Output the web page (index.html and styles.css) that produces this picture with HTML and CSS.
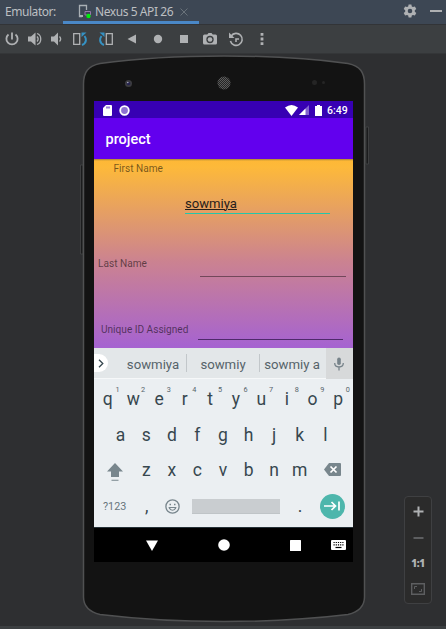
FILE: index.html
```html
<!DOCTYPE html>
<html lang="en">
<head>
<meta charset="utf-8">
<title>Emulator</title>
<link rel="stylesheet" href="styles.css">
</head>
<body>
<header class="tabs">
  <span class="tabs-label">Emulator:</span>
  <div class="tab">
    <svg class="tab-icon" width="14" height="15" viewBox="0 0 14 15"><path d="M4 12.5H1.5v-11h7V6" fill="none" stroke="#a9afb4" stroke-width="1.3"/><path d="M1 11h4v2H1z" fill="#a9afb4"/><path d="M12.5 11V7.5H7V11h2" fill="none" stroke="#9876aa"/><circle cx="10.5" cy="12" r="2.2" fill="#00ee0b"/></svg>
    <span>Nexus 5 API 26</span>
    <svg width="8" height="8" viewBox="0 0 8 8"><path d="M.5.5l7 7m0-7l-7 7" stroke="#69727a"/></svg>
  </div>
  <div class="tabs-actions">
    <svg width="14" height="14" viewBox="0 0 14 14"><path fill="#afb1b3" fill-rule="evenodd" d="M5.6.5h2.8l.4 1.900 1.200.7 1.900-.6 1.400 2.400L11.800 6.300v1.400l1.500 1.400-1.400 2.400-1.900-.6-1.200.7-.4 1.900H5.600l-.4-1.900-1.200-.7-1.900.6L.7 9.100l1.500-1.400V6.300L.7 4.900l1.400-2.400 1.900.6 1.200-.7zM7 4.700a2.300 2.300 0 1 0 0 4.600 2.300 2.300 0 0 0 0-4.600z"/></svg>
    <i class="minimize"></i>
  </div>
</header>
<div class="toolbar">
  <svg viewBox="0 0 16 16"><path d="M4.500 3.500a5.600 5.600 0 1 0 7 0M8 1.500v7" fill="none" stroke="#afb1b3" stroke-width="1.800"/></svg>
  <svg class="volume-up" viewBox="0 0 16 16"><path d="M1 5.500h3l4.500-4v13l-4.500-4H1z" fill="#afb1b3"/><path d="M10 5.500q2.300 2.500 0 5M10 2.500c5 1.500 5 9.500 0 11" fill="none" stroke="#afb1b3" stroke-width="1.300"/></svg>
  <svg class="volume-down" viewBox="0 0 16 16"><path d="M3 5.500h3l4-4v13l-4-4H3z" fill="#afb1b3"/><path d="M11.500 5.500q2.300 2.500 0 5" fill="none" stroke="#afb1b3" stroke-width="1.300"/></svg>
  <svg class="rotate-left" viewBox="0 0 16 16"><path d="M1.700 2.700h6v10.600h-6z" fill="none" stroke="#afb1b3" stroke-width="1.300"/><path d="M10 14c5-2 4.500-6.500 2.500-9" fill="none" stroke="#3592c4" stroke-width="2"/><path d="M9.500 6V1.500h5z" fill="#3592c4"/></svg>
  <svg viewBox="0 0 16 16"><path d="M8.300 2.700h6v10.600h-6z" fill="none" stroke="#afb1b3" stroke-width="1.300"/><path d="M6 14C1 12 1.500 7.500 3.500 5" fill="none" stroke="#3592c4" stroke-width="2"/><path d="M6.500 6V1.500h-5z" fill="#3592c4"/></svg>
  <svg viewBox="0 0 16 16"><path d="M12 3.500v9L3.500 8z" fill="#afb1b3"/></svg>
  <svg viewBox="0 0 16 16"><circle cx="8" cy="8" r="4.200" fill="#afb1b3"/></svg>
  <svg viewBox="0 0 16 16"><path d="M4 4h8v8H4z" fill="#afb1b3"/></svg>
  <svg viewBox="0 0 16 16"><path fill-rule="evenodd" d="M2.500 3.500h2.800L6.500 2h3l1.200 1.500h2.800q1.500 0 1.500 1.500v7q0 1.500-1.500 1.500h-11Q1 13.500 1 12V5q0-1.500 1.500-1.500zM8 4.800a3.700 3.700 0 1 0 0 7.400 3.700 3.700 0 0 0 0-7.400z" fill="#afb1b3"/><circle cx="8" cy="8.500" r="2.300" fill="#afb1b3"/></svg>
  <svg viewBox="0 0 16 16"><path d="M3.200 5a6 6 0 1 1-.8 5M8 11V8h3" fill="none" stroke="#afb1b3" stroke-width="1.600"/><path d="M1 1.500v5.500h5.500z" fill="#afb1b3"/></svg>
  <svg viewBox="0 0 16 16"><path d="M6.600 2h2.800v2.800H6.600zM6.600 6.600h2.800v2.800H6.600zM6.600 11.200h2.800V14H6.600z" fill="#afb1b3"/></svg>
</div>
<main class="canvas">
  <section class="phone">
    <svg class="phone-body" width="290" height="573" viewBox="80 53 290 573">
      <defs>
        <pattern id="mesh" width="2" height="2" patternUnits="userSpaceOnUse"><path d="M0 0h1v1H0zM1 1h1v1H1z" fill="#5c5c5c"/></pattern>
      </defs>
      <path d="M80.500 165h2.500v89h-2.500zM366 127h2.500v37H366z" fill="#1b1c1d" stroke="#454647" stroke-width=".8"/>
      <path d="M83.500 84C83.500 72 88 66 100 63.500Q155 56 224 56T348 63.500C360 66 364.500 72 364.500 84V597C364.500 607 358 612 348 614.500Q290 621.500 224 621.500T100 614.500C90 612 83.500 607 83.500 597Z" fill="#131313" stroke="#505152" stroke-width="1.500"/>
      <circle cx="128.500" cy="83.500" r="3.500" fill="#3c3c40"/><circle cx="128.500" cy="83.500" r="1.800" fill="#25234f"/><circle cx="127.800" cy="82.500" r=".8" fill="#aaaabd"/>
      <circle cx="224" cy="83" r="6.500" fill="#242424"/><circle cx="224" cy="83" r="6.500" fill="url(#mesh)"/>
      <circle cx="314.500" cy="82.500" r="2.500" fill="#252525"/><circle cx="323.500" cy="82.500" r="1.500" fill="#252525"/>
    </svg>
    <div class="screen">
      <div class="status">
        <svg width="9" height="11" viewBox="0 0 9 11"><path d="M3 0h5q1 0 1 1v9q0 1-1 1H1q-1 0-1-1V3z" fill="#fff"/><path d="M3.500 1.500h1v2h-1zM5.500 1.500h1v2h-1z" fill="#3700b3"/></svg>
        <svg width="11" height="11" viewBox="0 0 11 11"><circle cx="5.500" cy="5.500" r="4.300" fill="#8e70d1" stroke="#fff" stroke-width="1.800"/></svg>
        <svg class="wifi" width="13" height="11" viewBox="0 0 13 11"><path d="M0 2.500q6.500-5 13 0L6.500 11z" fill="#fff"/></svg>
        <svg width="10" height="10" viewBox="0 0 10 10"><path d="M10 0v10H0z" fill="#8261cf"/><path d="M6.500 3.500V10H0z" fill="#fff"/></svg>
        <svg class="battery" width="7" height="11" viewBox="0 0 7 11"><path d="M2 0h3v1h2v10H0V1h2z" fill="#fff"/></svg>
        <span class="clock">6:49</span>
      </div>
      <div class="appbar">project</div>
      <div class="form">
        <div class="label first">First Name</div>
        <div class="field first-input"><u>sowmiya</u></div>
        <div class="row last"><span class="label">Last Name</span><div class="field"></div></div>
        <div class="row unique"><span class="label">Unique ID Assigned</span><div class="field"></div></div>
      </div>
      <div class="suggestions">
        <span class="expand"><svg width="6" height="9" viewBox="0 0 6 9"><path d="M1 .7l3.800 3.800L1 8.300" fill="none" stroke="#37474f" stroke-width="1.300"/></svg></span>
        <span class="word">sowmiya</span>
        <span class="word">sowmiy</span>
        <span class="word">sowmiy a</span>
        <span class="mic"><svg width="10" height="14" viewBox="0 0 10 14"><rect x="3.200" y=".5" width="3.600" height="7.500" rx="1.800" fill="#77838a"/><path d="M.7 6c0 5.300 8.600 5.300 8.600 0M5 10v3.500" fill="none" stroke="#77838a" stroke-width="1.300"/></svg></span>
      </div>
      <div class="keyboard">
        <div class="keys">
          <span class="key">q<sup>1</sup></span><span class="key">w<sup>2</sup></span><span class="key">e<sup>3</sup></span><span class="key">r<sup>4</sup></span><span class="key">t<sup>5</sup></span><span class="key">y<sup>6</sup></span><span class="key">u<sup>7</sup></span><span class="key">i<sup>8</sup></span><span class="key">o<sup>9</sup></span><span class="key">p<sup>0</sup></span>
        </div>
        <div class="keys">
          <span class="key">a</span><span class="key">s</span><span class="key">d</span><span class="key">f</span><span class="key">g</span><span class="key">h</span><span class="key">j</span><span class="key">k</span><span class="key">l</span>
        </div>
        <div class="keys">
          <span class="key wide"><svg class="shift" width="16" height="18" viewBox="0 0 16 18"><path d="M8 0l8 8.500h-4V14H4V8.500H0zM4.500 16.800h7v1h-7z" fill="#78868d"/></svg></span>
          <span class="key">z</span><span class="key">x</span><span class="key">c</span><span class="key">v</span><span class="key">b</span><span class="key">n</span><span class="key">m</span>
          <span class="key wide"><svg class="delete" width="17" height="13" viewBox="0 0 17 13"><path d="M5 0h11q1 0 1 1v11q0 1-1 1H5L0 6.500z" fill="#78868d"/><path d="M6.500 3.500l6 6m0-6l-6 6" stroke="#fff" stroke-width="1.700"/></svg></span>
        </div>
        <div class="keys bottom">
          <span class="symbols">?123</span>
          <span class="key">,</span>
          <span class="key"><svg width="15" height="15" viewBox="0 0 15 15"><circle cx="7.500" cy="7.500" r="6.600" fill="none" stroke="#78868d" stroke-width="1.300"/><path d="M4.200 8.500c1 3.600 5.600 3.600 6.600 0z" fill="none" stroke="#78868d" stroke-width="1.100"/><path d="M4.500 4.700h1.500v1.500H4.500zM9 4.700h1.500v1.500H9z" fill="#78868d"/></svg></span>
          <span class="space"></span>
          <span class="key dot">.</span>
          <span class="enter"><svg width="16" height="10" viewBox="0 0 16 10"><path d="M0 5h11M7.500 1l4 4-4 4M15 .5v9" fill="none" stroke="#fff" stroke-width="1.700"/></svg></span>
        </div>
      </div>
      <nav class="nav">
        <svg width="12" height="11" viewBox="0 0 12 11"><path d="M0 .5h12L6 11z" fill="#fff"/></svg>
        <svg width="12" height="12" viewBox="0 0 12 12"><circle cx="6" cy="6" r="5.800" fill="#fff"/></svg>
        <svg width="11" height="11" viewBox="0 0 11 11"><rect width="11" height="11" rx=".5" fill="#fff"/></svg>
        <svg width="15" height="10" viewBox="0 0 15 10"><rect width="15" height="10" rx="1" fill="#fff"/><path d="M2.500 2.500h10.500M2.500 4.800h10.500" stroke="#000" stroke-width="1.200" stroke-dasharray="1.200 1"/><path d="M4.500 7.500h6" stroke="#000" stroke-width="1.200"/></svg>
      </nav>
    </div>
  </section>
  <aside class="zoom">
    <svg width="11" height="11" viewBox="0 0 11 11"><path d="M5.500.5v10M.5 5.500h10" stroke="#afb1b3" stroke-width="2"/></svg>
    <svg width="11" height="2" viewBox="0 0 11 2"><path d="M.5 1h10" stroke="#5d5e60" stroke-width="2"/></svg>
    <span>1:1</span>
    <svg width="14" height="12" viewBox="0 0 14 12"><path d="M.7.700h12.600v10.600H.7z" fill="none" stroke="#5d5e60" stroke-width="1.400"/><path d="M3.500 6V3.500H6M8 8.500h2.500V6" fill="none" stroke="#5d5e60"/></svg>
  </aside>
</main>
<footer class="edge"></footer>
</body>
</html>
```

FILE: styles.css
```css
* { box-sizing: border-box; }
body { margin: 0; width: 446px; height: 629px; overflow: hidden; display: flex; flex-direction: column; background: #2e2f31; font-family: Roboto, sans-serif; }
svg { display: block; flex: none; }

.tabs { height: 25px; flex: none; display: flex; background: #3d4754; border-bottom: 1px solid #323437; font: 12px/24px "Noto Sans", sans-serif; color: #bcbfc2; }
.tabs-label { width: 63px; padding-left: 5px; letter-spacing: -.45px; }
.tab { width: 136px; padding-left: 15px; display: flex; align-items: center; border-bottom: 3px solid #4a88c7; line-height: 22px; white-space: nowrap; letter-spacing: -.43px; }
.tab span { width: 79px; margin: 2px 6px 0 3px; }
.tab-icon { margin-top: 2px; }
.tab svg:last-child { margin-top: 3px; }
.tabs-actions { margin-left: auto; display: flex; align-items: center; gap: 13px; padding-right: 4px; }
.tabs-actions svg { margin-top: -2px; }
.minimize { width: 12px; height: 2px; margin-top: -2px; background: #afb1b3; }

.toolbar { height: 28px; flex: none; display: flex; align-items: center; padding-left: 4px; gap: 10px; background: #3c3f41; }
.toolbar svg { width: 16px; height: 16px; }
.toolbar .volume-up { margin-left: -3px; }
.toolbar .volume-down { margin-left: -5px; }
.toolbar .rotate-left { margin-left: -2px; }

.canvas { height: 573px; flex: none; display: flex; border-top: 1px solid #343638; background: #2e2f31; }
.phone { position: relative; width: 290px; margin-left: 80px; padding: 47px 0 0 14px; }
.phone-body { position: absolute; left: 0; top: -1px; }
.screen { position: relative; width: 259px; height: 461px; display: flex; flex-direction: column; overflow: hidden; }

.status { height: 17px; flex: none; display: flex; align-items: center; padding: 1px 5px 0 9px; background: #3700b3; color: #fff; }
.status svg + svg { margin-left: 7px; }
.status .wifi { margin-left: auto !important; }
.status .wifi + svg { margin-left: 1px; }
.status .battery { margin-left: 6px !important; }
.clock { margin-left: 5px; font-size: 10.500px; font-weight: 500; line-height: 16px; width: 21px; padding-top: 1px; white-space: nowrap; }
.appbar { height: 41px; flex: none; padding-left: 11.500px; background: #6200ee; color: #fff; font-size: 14.500px; font-weight: 500; line-height: 43px; }

.form { height: 189px; flex: none; background: linear-gradient(#a78535 0, #feb837 2px, #fdb93a 8px, #cb8291 103px, #a663d0 187px); }
.label { font-size: 10.100px; line-height: 14px; color: rgba(0, 0, 0, .54); white-space: nowrap; }
.first { padding: 3px 0 0 19.500px; }
.field { height: 22px; border-bottom: 1px solid rgba(0, 0, 0, .42); }
.first-input { width: 145px; margin: 16px 0 0 91px; padding-top: 4px; border-color: #24c6aa; font-size: 13.100px; line-height: 16px; color: #28201a; height: 22px; }
.first-input u { text-decoration-thickness: 1px; text-underline-offset: 1px; }
.row { display: flex; align-items: flex-end; }
.row .label { padding-bottom: 6px; }
.row .field { margin-left: auto; width: 146px; }
.last { margin-top: 41px; padding: 0 7px 0 4px; }
.unique { margin-top: 41px; padding: 0 10px 0 7px; }
.unique .label { padding-bottom: 3px; }
.unique .field { width: 145px; border-color: #4f2a6b; }

.suggestions { height: 31px; flex: none; display: flex; align-items: center; background: #e3e7e9; border-bottom: 1px solid #f6f8f9; }
.expand { width: 14px; height: 18px; border-radius: 0 9px 9px 0; background: #fff; display: flex; align-items: center; padding-left: 4px; }
.word { height: 18px; padding-top: 2px; text-align: center; font-size: 13.200px; line-height: 18px; color: #566369; white-space: nowrap; border-left: 1px solid #c2c7ca; }
.expand + .word { border: 0; width: 73px; padding-left: 7px; margin-left: 5px; }
.word + .word { width: 73px; margin-left: 0; }
.word:nth-child(4) { width: 67px; padding-right: 2px; }
.mic { height: 31px; width: 27px; padding: 2px 1px 0 0; display: flex; align-items: center; justify-content: center; background: #d7d9da; }

.keyboard { height: 148px; flex: none; padding: 3px 2px 0 1px; background: #ebeff2; color: #37474f; }
.keys { height: 35.500px; display: flex; justify-content: center; align-items: center; }
.key { position: relative; width: 25.600px; text-align: center; font-size: 17.500px; line-height: 35px; display: flex; justify-content: center; align-items: center; }
.key sup { position: absolute; right: 1px; top: 4px; font-size: 7.300px; line-height: 8px; color: #56646b; }
.wide { width: 38.400px; height: 35px; }
.shift { margin: 2px 0 0 2px; }
.delete { margin: -2px 0 0 2px; }
.bottom { justify-content: flex-start; }
.symbols { width: 39px; padding-left: 8px; font-size: 10.800px; color: #66747b; }
.space { width: 88px; height: 15px; margin-left: 7px; background: #c9cdd0; border-bottom: 1px solid #bfc4c7; }
.dot { margin-left: 7px; }
.enter { width: 25px; height: 25px; margin-left: 7px; border-radius: 50%; background: #4db6ac; display: flex; align-items: center; justify-content: center; }

.nav { height: 35px; flex: none; display: flex; align-items: center; padding-left: 52px; background: #000; border-top: 1px solid #263238; }
.nav svg:nth-child(2) { margin-left: 60px; }
.nav svg:nth-child(3) { margin-left: 60px; }
.nav svg:nth-child(4) { margin-left: 30px; }

.zoom { width: 28px; height: 108px; margin: 442px 0 0 34px; border: 1px solid #3f4042; border-radius: 4px; background: #2b2b2b; display: flex; flex-direction: column; align-items: center; padding-top: 9px; color: #afb1b3; }
.zoom svg:nth-child(2) { margin-top: 20px; }
.zoom span { margin-top: 16px; font: 800 10px/16px "Open Sans", sans-serif; letter-spacing: -.3px; }
.zoom svg:last-child { margin-top: 12px; }

.edge { height: 3px; flex: none; background: #3c3f41; }
```
